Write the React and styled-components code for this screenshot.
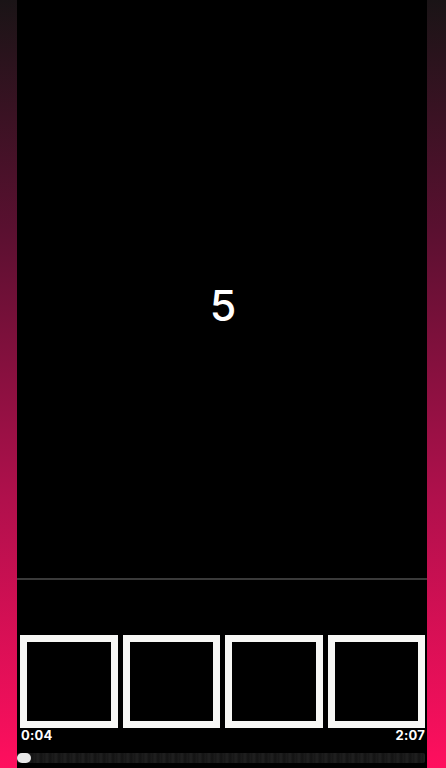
import React from 'react';
import styled, { createGlobalStyle } from 'styled-components';

const GlobalStyle = createGlobalStyle`
  html, body {
    margin: 0;
    padding: 0;
    height: 100%;
  }
  body {
    background: linear-gradient(to bottom, #1a1416 0%, #5a1030 30%, #b0104c 65%, #ff0f5e 100%);
    font-family: 'Inter', 'Liberation Sans', sans-serif;
    color: #fff;
  }
`;

const thumbs = [0, 1, 2, 3];

const App = () => (
  <>
    <GlobalStyle />
    <Frame>
      <Panel>
        <Stage>
          <Count>5</Count>
        </Stage>
        <Divider />
        <Timeline>
          <ThumbRow>
            {thumbs.map(i => (
              <Thumb key={i} />
            ))}
          </ThumbRow>
          <TimeRow>
            <Time>0:04</Time>
            <Time>2:07</Time>
          </TimeRow>
          <Scrubber>
            <Knob />
          </Scrubber>
        </Timeline>
      </Panel>
    </Frame>
  </>
);

const Frame = styled.div`
  display: flex;
  height: 768px;
  padding: 0 19px 0 17px;
`;

const Panel = styled.main`
  flex: 1;
  display: flex;
  flex-direction: column;
  background: #000;
`;

const Stage = styled.section`
  height: 578px;
  display: flex;
  align-items: center;
  justify-content: center;
  padding-top: 32px;
  box-sizing: border-box;
`;

const Count = styled.span`
  font-family: 'Inter', 'Open Sans', sans-serif;
  font-size: 43px;
  font-weight: 500;
  line-height: 1;
  margin-left: 2px;
`;

const Divider = styled.hr`
  margin: 0;
  border: 0;
  height: 2px;
  background: #3a3a3a;
`;

const Timeline = styled.section`
  display: flex;
  flex-direction: column;
  padding: 55px 2px 0 3px;
`;

const ThumbRow = styled.div`
  display: flex;
  gap: 5px;
`;

const Thumb = styled.div`
  flex: 1;
  height: 93px;
  box-sizing: border-box;
  border: 7px solid #f7f7f5;
  background: #000;
`;

const TimeRow = styled.div`
  display: flex;
  justify-content: space-between;
  padding: 0 0 0 1px;
  height: 14px;
  align-items: center;
`;

const Time = styled.span`
  font-family: 'Inter', 'Open Sans', sans-serif;
  font-size: 13px;
  font-weight: 700;
  letter-spacing: 0.2px;
`;

const Scrubber = styled.div`
  margin: 11px 0 0 -3px;
  height: 10px;
  border-radius: 2px;
  background: repeating-linear-gradient(
    to right,
    #161616 0px,
    #202020 3px,
    #131313 6px,
    #1c1c1c 9px
  );
  display: flex;
  align-items: center;
`;

const Knob = styled.div`
  width: 14px;
  height: 10px;
  border-radius: 5px;
  background: #e8e8e8;
`;

export default App;
